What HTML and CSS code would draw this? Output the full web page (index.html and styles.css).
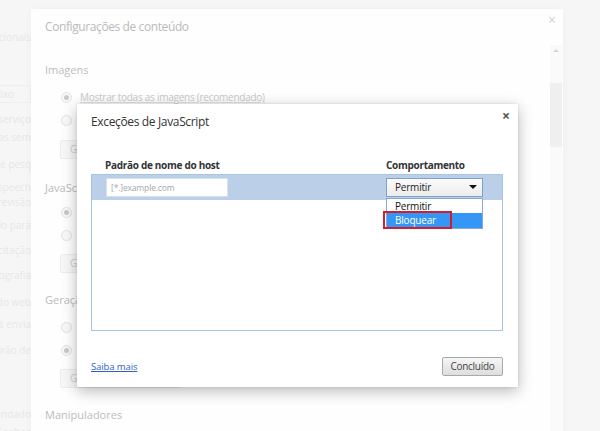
FILE: index.html
```html
<!DOCTYPE html>
<html lang="pt">
<head>
<meta charset="utf-8">
<title>Exceções de JavaScript</title>
<link rel="stylesheet" href="styles.css">
</head>
<body>
<div class="page">
  <div class="behind">
    <div class="bl l1">adicionais</div>
    <div class="bl box l2">fixo</div>
    <div class="bl l3">para serviço</div>
    <div class="bl l4">provas sem</div>
    <div class="bl l5">mecanismo de pesq</div>
    <div class="bl l6">Usar speech</div>
    <div class="bl l7">previsão</div>
    <div class="bl l8">usado para</div>
    <div class="bl l9">Enviar solicitação</div>
    <div class="bl l10">corrigir ortografia</div>
    <div class="bl l11">Conteúdo web</div>
    <div class="bl l12">das envia</div>
    <div class="bl l13">Padrão de</div>
    <div class="bl l14">recomendado</div>
    <div class="bl l15">Senhas</div>
  </div>

  <div class="outer">
    <div class="o-head">
      <span class="o-title">Configurações de conteúdo</span>
      <span class="o-close">×</span>
    </div>
    <div class="o-body">
      <div class="o-content">
        <div class="o-h h-img">Imagens</div>
        <div class="o-radio r-a"><span class="rd on"></span><span class="rl link">Mostrar todas as imagens (recomendado)</span></div>
        <div class="o-radio r-b"><span class="rd"></span><span class="rl">Não mostrar nenhuma imagem</span></div>
        <div class="o-btn b-a">Gerenciar exceções...</div>

        <div class="o-h h-js">JavaScript</div>
        <div class="o-radio r-c"><span class="rd on"></span><span class="rl">Permitir que todos os sites executem JavaScript</span></div>
        <div class="o-radio r-b"><span class="rd"></span><span class="rl">Não permitir que nenhum site execute JavaScript</span></div>
        <div class="o-btn b-b">Gerenciar exceções...</div>

        <div class="o-h h-ger">Geração de chaves</div>
        <div class="o-radio r-a"><span class="rd"></span><span class="rl">Permitir que todos os sites usem a geração de chaves</span></div>
        <div class="o-radio r-b"><span class="rd on"></span><span class="rl">Não permitir que nenhum site use a geração de chaves</span></div>
        <div class="o-btn b-c">Gerenciar exceções...</div>

        <div class="o-h h-man">Manipuladores</div>
      </div>
      <div class="scrollbar">
        <div class="sb-arrow"></div>
        <div class="sb-thumb"></div>
      </div>
    </div>
  </div>

  <div class="dialog">
    <div class="d-head">
      <span class="d-title">Exceções de JavaScript</span>
      <span class="d-close">×</span>
    </div>
    <div class="d-body">
      <div class="cols">
        <span class="col-host">Padrão de nome do host</span>
        <span class="col-beh">Comportamento</span>
      </div>
      <div class="list">
        <div class="row sel">
          <div class="inp">[*.]example.com</div>
          <div class="select-wrap">
            <div class="select"><span>Permitir</span><span class="caret"></span></div>
            <div class="popup">
              <div class="opt">Permitir</div>
              <div class="opt hi">Bloquear</div>
              <div class="redbox"></div>
            </div>
          </div>
        </div>
      </div>
      <div class="d-foot">
        <a class="more" href="#">Saiba mais</a>
        <span class="done">Concluído</span>
      </div>
    </div>
  </div>
</div>
</body>
</html>
```

FILE: styles.css
```css
html, body {
  margin: 0;
  padding: 0;
}
body {
  width: 600px;
  height: 431px;
  overflow: hidden;
  background: #f6f6f6;
  font-family: "Open Sans", "Noto Sans", sans-serif;
}
.page {
  position: relative;
  width: 600px;
  height: 431px;
  overflow: hidden;
}

/* faint settings page behind */
.behind {
  width: 31px;
  overflow: hidden;
  display: flex;
  flex-direction: column;
  align-items: flex-end;
}
.bl {
  font-size: 10px;
  line-height: 14px;
  color: #e6e6e6;
  white-space: nowrap;
}
.l1 { margin-top: 30px; }
.l2 { margin-top: 41px; border: 1px solid #efefef; padding: 1px 3px; width: 30px; text-align: left; }
.l3 { margin-top: 9px; }
.l4 { margin-top: 4px; }
.l5 { margin-top: 13px; }
.l6 { margin-top: 9px; }
.l7 { margin-top: 1px; }
.l8 { margin-top: 9px; }
.l9 { margin-top: 11px; }
.l10 { margin-top: 11px; }
.l11 { margin-top: 13px; }
.l12 { margin-top: 8px; }
.l13 { margin-top: 12px; }
.l14 { margin-top: 50px; }
.l15 { margin-top: 4px; }

/* outer faded dialog */
.outer {
  position: absolute;
  left: 31px;
  top: 9px;
  width: 532px;
  height: 440px;
  background: #fefefe;
  box-shadow: 0 0 8px rgba(0,0,0,0.04);
  display: flex;
  flex-direction: column;
}
.o-head {
  height: 36px;
  display: flex;
  justify-content: space-between;
  align-items: flex-start;
  padding-left: 14px;
  box-sizing: border-box;
}
.o-title {
  margin-top: 9px;
  font-size: 12px;
  letter-spacing: -0.4px;
  line-height: 18px;
  color: #bababa;
}
.o-close {
  margin-top: 3px;
  margin-right: 7px;
  font-size: 14px;
  line-height: 16px;
  color: #d2d2d2;
}
.o-body {
  flex: 1;
  display: flex;
}
.o-content {
  flex: 1;
  padding-left: 14px;
}
.o-h {
  font-size: 11px;
  line-height: 16px;
  color: #bcbcbc;
}
.h-img { margin-top: 17px; }
.h-js { margin-top: 21px; }
.h-ger { margin-top: 19px; }
.h-man { margin-top: 19px; }
.o-radio {
  display: flex;
  align-items: center;
  height: 16px;
  padding-left: 16px;
}
.r-a { margin-top: 11px; }
.r-b { margin-top: 7px; }
.r-c { margin-top: 8px; }
.rd {
  width: 9px;
  height: 9px;
  border: 1px solid #e2e2e2;
  border-radius: 50%;
  background: #f8f8f8;
  position: relative;
  flex: none;
}
.rd.on::after {
  content: "";
  position: absolute;
  left: 2px;
  top: 2px;
  width: 5px;
  height: 5px;
  border-radius: 50%;
  background: #c8c8c8;
}
.rl {
  margin-left: 8px;
  font-size: 10px;
  letter-spacing: -0.25px;
  color: #c8c8c8;
  white-space: nowrap;
}
.rl.link { text-decoration: underline; text-decoration-color: #dedede; }
.o-btn {
  margin-left: 15px;
  width: 110px;
  height: 17px;
  border: 1px solid #ececec;
  background: #f7f7f7;
  font-size: 10px;
  line-height: 17px;
  color: #cfcfcf;
  padding-left: 9px;
  border-radius: 2px;
}
.b-a { margin-top: 12px; }
.b-b { margin-top: 11px; }
.b-c { margin-top: 11px; }
.scrollbar {
  width: 12px;
  margin-right: 1px;
  background: #fafafa;
  display: flex;
  flex-direction: column;
  align-items: center;
}
.sb-arrow {
  margin-top: 4px;
  width: 0;
  height: 0;
  border-left: 3px solid transparent;
  border-right: 3px solid transparent;
  border-bottom: 3px solid #d6d6d6;
}
.sb-thumb {
  margin-top: 31px;
  width: 12px;
  height: 64px;
  background: #efefef;
}

/* foreground dialog */
.dialog {
  position: absolute;
  left: 77px;
  top: 104px;
  width: 441px;
  height: 283px;
  background: #fff;
  box-shadow: 0 4px 14px rgba(0,0,0,0.28), 0 0 2px rgba(0,0,0,0.12);
  display: flex;
  flex-direction: column;
}
.d-head {
  display: flex;
  justify-content: space-between;
  align-items: flex-start;
  padding-left: 14px;
}
.d-title {
  margin-top: 9px;
  font-size: 12px;
  letter-spacing: -0.35px;
  line-height: 18px;
  color: #333;
}
.d-close {
  margin-top: 4px;
  margin-right: 8px;
  font-size: 14px;
  line-height: 16px;
  font-weight: bold;
  color: #555;
}
.d-body {
  padding: 0 15px 0 14px;
  display: flex;
  flex-direction: column;
}
.cols {
  margin-top: 26px;
  display: flex;
  height: 16px;
  align-items: center;
  font-size: 10px;
  letter-spacing: -0.3px;
  font-weight: bold;
  color: #333;
}
.col-host { margin-left: 14px; width: 281px; }
.list {
  margin-top: 1px;
  height: 155px;
  border: 1px solid #a8c4e2;
}
.row {
  height: 25px;
  display: flex;
  align-items: center;
  padding-left: 14px;
}
.row.sel { background: #bccfe9; }
.inp {
  width: 122px;
  height: 19px;
  background: #fff;
  border: 1px solid #d6e0ee;
  box-sizing: border-box;
  padding-left: 4px;
  font-size: 8.5px;
  letter-spacing: -0.15px;
  line-height: 17px;
  color: #a6a6a6;
}
.select-wrap {
  position: relative;
  margin-left: 158px;
}
.select {
  width: 97px;
  height: 19px;
  box-sizing: border-box;
  border: 1px solid #7da2ce;
  background: linear-gradient(#fbfbfb, #ececec);
  display: flex;
  align-items: center;
  justify-content: space-between;
  padding: 0 5px 0 8px;
  font-size: 10px;
  letter-spacing: -0.2px;
  color: #222;
  margin-top: -1px;
}
.caret {
  width: 0;
  height: 0;
  border-left: 4px solid transparent;
  border-right: 4px solid transparent;
  border-top: 4px solid #111;
}
.popup {
  position: absolute;
  left: 0;
  top: 19px;
  width: 97px;
  box-sizing: border-box;
  border: 1px solid #8aa8cf;
  background: #fff;
  z-index: 2;
}
.opt {
  height: 14px;
  line-height: 14px;
  font-size: 10px;
  letter-spacing: -0.2px;
  padding-left: 8px;
  color: #111;
}
.opt.hi {
  height: 15px;
  background: #3597f5;
  color: #fff;
}
.redbox {
  position: absolute;
  left: -4px;
  top: 12px;
  width: 69px;
  height: 18px;
  box-sizing: border-box;
  border: 2px solid #d21f2b;
}
.d-foot {
  margin-top: 26px;
  display: flex;
  justify-content: space-between;
  align-items: center;
}
.more {
  font-size: 9.5px;
  letter-spacing: -0.1px;
  color: #2e5fc4;
  text-decoration: underline;
}
.done {
  width: 61px;
  height: 19px;
  box-sizing: border-box;
  border: 1px solid #a9a9a9;
  border-radius: 2px;
  background: linear-gradient(#f6f6f6, #dedede);
  font-size: 10px;
  letter-spacing: -0.3px;
  line-height: 17px;
  text-align: center;
  color: #444;
}
```
